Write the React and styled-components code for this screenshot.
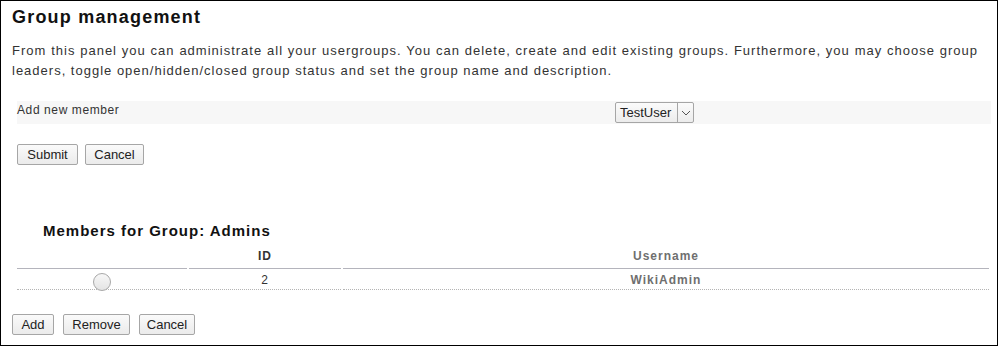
import styled, { createGlobalStyle } from "styled-components";

const GlobalStyle = createGlobalStyle`
  body {
    margin: 0;
    background: #fff;
    font-family: "Liberation Sans", Arial, sans-serif;
    color: #333;
  }
`;

const Frame = styled.div`
  box-sizing: border-box;
  width: 998px;
  height: 346px;
  border: 1px solid #000;
  padding: 5px 0 0 11px;
`;

const Title = styled.h1`
  margin: 0;
  font-size: 18px;
  font-weight: bold;
  color: #111;
  letter-spacing: 1.2px;
  line-height: 22px;
`;

const Intro = styled.p`
  margin: 13px 19px 0 0;
  font-size: 13px;
  line-height: 20px;
  text-align: justify;
  letter-spacing: 1px;
  color: #333;
`;

const FieldRow = styled.div`
  display: grid;
  grid-template-columns: 598px 1fr;
  align-items: center;
  height: 23px;
  margin: 20px 6px 0 5px;
  background: #f7f7f7;
`;

const FieldLabel = styled.span`
  font-size: 12px;
  letter-spacing: 0.6px;
  color: #333;
  align-self: start;
  padding-top: 2px;
`;

const Select = styled.div`
  display: inline-flex;
  align-items: stretch;
  width: 79px;
  height: 21px;
  box-sizing: border-box;
  border: 1px solid #a6a6a6;
  border-radius: 2px;
  background: linear-gradient(#fbfbfb, #ececec);
  font-size: 13px;
  color: #222;
`;

const SelectText = styled.span`
  flex: 1;
  padding-left: 4px;
  line-height: 19px;
`;

const SelectArrow = styled.span`
  display: flex;
  align-items: center;
  justify-content: center;
  width: 15px;
  border-left: 1px solid #a6a6a6;
`;

const Buttons = styled.div`
  display: flex;
  gap: ${(p) => p.gap}px;
  margin: ${(p) => p.top}px 0 0 ${(p) => p.left}px;
`;

const Button = styled.button`
  box-sizing: border-box;
  width: ${(p) => p.w}px;
  height: 21px;
  padding: 0;
  border: 1px solid #a6a6a6;
  border-radius: 2px;
  background: linear-gradient(#fafafa, #ebebeb);
  font-family: "Liberation Sans", Arial, sans-serif;
  font-size: 13px;
  color: #222;
`;

const SubTitle = styled.h2`
  margin: 57px 0 0 31px;
  font-size: 15px;
  font-weight: bold;
  color: #111;
  letter-spacing: 1px;
  line-height: 18px;
`;

const Members = styled.table`
  margin: 4px 0 0 3px;
  width: 976px;
  border-collapse: separate;
  border-spacing: 2px 0;
  font-size: 12px;
  letter-spacing: 1px;
`;

const HeadCell = styled.th`
  width: ${(p) => p.w}px;
  height: 24px;
  padding: 0;
  text-align: center;
  font-weight: bold;
  color: ${(p) => p.tone};
  border-bottom: 1px solid #b4b4bc;
  vertical-align: middle;
`;

const Cell = styled.td`
  height: 17px;
  padding: 3px 0 0;
  line-height: 17px;
  text-align: center;
  color: ${(p) => p.tone || "#333"};
  font-weight: ${(p) => (p.bold ? "bold" : "normal")};
  border-bottom: 1px dotted #b4b4b4;
  vertical-align: top;
`;

const Radio = styled.span`
  display: block;
  width: 18px;
  height: 18px;
  margin: 0 auto -1px;
  box-sizing: border-box;
  border: 1px solid #a8a8a8;
  border-radius: 50%;
  background: linear-gradient(#f7f7f7, #e4e4e4);
  transform: translate(0, 1px);
`;

export default function App() {
  return (
    <>
      <GlobalStyle />
      <Frame>
        <Title>Group management</Title>
        <Intro>
          From this panel you can administrate all your usergroups. You can
          delete, create and edit existing groups. Furthermore, you may choose
          group leaders, toggle open/hidden/closed group status and set the
          group name and description.
        </Intro>
        <FieldRow>
          <FieldLabel>Add new member</FieldLabel>
          <div>
            <Select>
              <SelectText>TestUser</SelectText>
              <SelectArrow>
                <svg width="10" height="6" viewBox="0 0 10 6">
                  <path d="M1 1l4 4 4-4" fill="none" stroke="#555" strokeWidth="1" />
                </svg>
              </SelectArrow>
            </Select>
          </div>
        </FieldRow>
        <Buttons top={20} left={5} gap={7}>
          <Button w={61}>Submit</Button>
          <Button w={59}>Cancel</Button>
        </Buttons>
        <SubTitle>Members for Group: Admins</SubTitle>
        <Members>
          <thead>
            <tr>
              <HeadCell w={170} tone="#333" />
              <HeadCell w={152} tone="#333">ID</HeadCell>
              <HeadCell tone="#6f6f6f">Username</HeadCell>
            </tr>
          </thead>
          <tbody>
            <tr>
              <Cell>
                <Radio />
              </Cell>
              <Cell>2</Cell>
              <Cell bold tone="#6f6f6f">WikiAdmin</Cell>
            </tr>
          </tbody>
        </Members>
        <Buttons top={24} left={0} gap={9}>
          <Button w={42}>Add</Button>
          <Button w={67}>Remove</Button>
          <Button w={56}>Cancel</Button>
        </Buttons>
      </Frame>
    </>
  );
}
